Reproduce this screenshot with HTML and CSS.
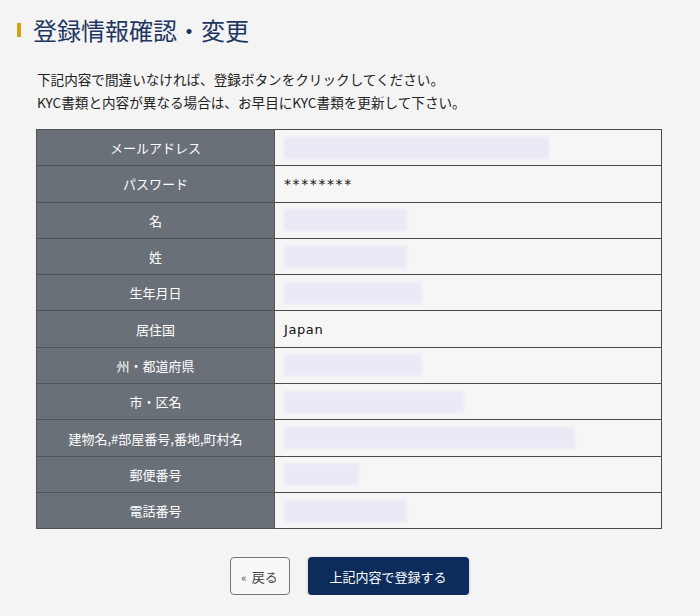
FILE: index.html
```html
<!DOCTYPE html>
<html lang="ja">
<head>
  <meta charset="UTF-8" />
  <title>登録情報確認・変更</title>
  <link rel="stylesheet" href="styles.css">
</head>
<body>
  <div id="page">
    <h1 class="title">登録情報確認・変更</h1>

    <p class="lead">下記内容で間違いなければ、登録ボタンをクリックしてください。<br>KYC書類と内容が異なる場合は、お早目にKYC書類を更新して下さい。</p>

    <!-- 確認テーブル -->
    <table class="confirm">
      <tr><th>メールアドレス</th><td><span class="mask" style="width:265px"></span></td></tr>
      <tr><th>パスワード</th><td class="pw">********</td></tr>
      <tr><th>名</th><td><span class="mask" style="width:123px"></span></td></tr>
      <tr><th>姓</th><td><span class="mask" style="width:123px"></span></td></tr>
      <tr><th>生年月日</th><td><span class="mask" style="width:138px"></span></td></tr>
      <tr><th>居住国</th><td class="txt">Japan</td></tr>
      <tr><th>州・都道府県</th><td><span class="mask" style="width:138px"></span></td></tr>
      <tr><th>市・区名</th><td><span class="mask" style="width:180px"></span></td></tr>
      <tr><th>建物名,#部屋番号,番地,町村名</th><td><span class="mask" style="width:291px"></span></td></tr>
      <tr><th>郵便番号</th><td><span class="mask" style="width:75px"></span></td></tr>
      <tr><th>電話番号</th><td><span class="mask" style="width:123px"></span></td></tr>
    </table>

    <div class="actions">
      <button class="btn back"><span class="arr">«</span>戻る</button>
      <button class="btn submit">上記内容で登録する</button>
    </div>
  </div>
</body>
</html>
```

FILE: styles.css
```css
html, body { margin:0; padding:0; background:#f4f4f4; font-family:"Noto Sans CJK JP", sans-serif; color:#222; }
#page { padding:14px 38px 0 36px; }

/* 見出し */
.title { position:relative; margin:0 0 0 -3px; font-size:24px; font-weight:400; line-height:32px; color:#1e3760; }
.title::before { content:""; position:absolute; left:-16px; top:9px; width:4px; height:14px; background:#d4a312; }

.lead { margin:22px 0 0 1px; font-size:13.6px; line-height:23px; color:#222; }

/* テーブル */
.confirm { width:626px; margin-top:15px; border-collapse:collapse; border:1px solid #4a4a4a; }
.confirm tr { height:36.3px; }
.confirm th, .confirm td { border:1px solid #4a4a4a; padding:0; font-size:13px; }
.confirm th { width:237px; background:#6a7078; color:#fff; font-weight:400; text-align:center; border-color:#505459; }
.confirm td { background:#f6f6f6; padding-left:9px; font-family:"DejaVu Sans", sans-serif; color:#111; }
.confirm td.pw { font-size:14px; letter-spacing:1.6px; }
.confirm td.txt { letter-spacing:0.6px; }
.mask { display:block; height:22px; background:#eaeaf6; filter:blur(1.5px); }

/* ボタン */
.actions { display:flex; justify-content:center; gap:18px; margin-top:28px; }
.btn { height:38px; border-radius:4px; font-family:"Noto Sans CJK JP", sans-serif; font-size:13px; cursor:pointer; }
.btn.back { width:60px; background:#f8f8f8; border:1px solid #777; color:#444; padding:0; }
.btn.back .arr { font-size:11px; margin-right:5px; }
.btn.submit { width:161px; background:#0c2d5c; border:none; color:#fff; box-shadow:0 1px 3px rgba(0,0,0,0.25); }
```
